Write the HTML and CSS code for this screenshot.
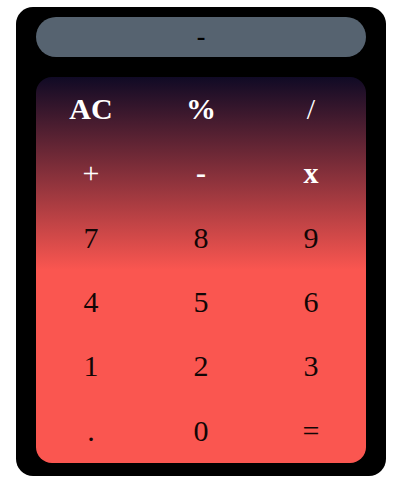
FILE: index.html
```html
<!DOCTYPE html>
<html>
<head>
<meta charset="utf-8">
<link rel="stylesheet" href="styles.css">
</head>
<body>
<div class="calc">
  <div class="display">-</div>
  <div class="keypad">
    <button class="key op bold">AC</button>
    <button class="key op bold">%</button>
    <button class="key op">/</button>
    <button class="key op">+</button>
    <button class="key op bold">-</button>
    <button class="key op bold">x</button>
    <button class="key">7</button>
    <button class="key">8</button>
    <button class="key">9</button>
    <button class="key">4</button>
    <button class="key">5</button>
    <button class="key">6</button>
    <button class="key">1</button>
    <button class="key">2</button>
    <button class="key">3</button>
    <button class="key">.</button>
    <button class="key">0</button>
    <button class="key">=</button>
  </div>
</div>
</body>
</html>
```
FILE: styles.css
```css
html, body {
  margin: 0;
  padding: 0;
  background: #ffffff;
}
body {
  padding: 7px 0 0 16px;
  font-family: "Liberation Serif", "Times New Roman", serif;
}
.calc {
  width: 370px;
  box-sizing: border-box;
  background: #000000;
  border-radius: 17px;
  padding: 10px 20px 13px;
  display: flex;
  flex-direction: column;
  gap: 20px;
}
.display {
  height: 40px;
  border-radius: 20px;
  background: #566370;
  color: #000;
  font-weight: bold;
  font-size: 26px;
  display: flex;
  align-items: center;
  justify-content: center;
}
.keypad {
  height: 386px;
  border-radius: 16px;
  background: linear-gradient(to bottom, #100a25 0%, #fa5650 50%, #fa5650 100%);
  display: grid;
  grid-template-columns: repeat(3, 1fr);
  grid-template-rows: repeat(6, 1fr);
}
.key {
  background: transparent;
  border: none;
  padding: 0;
  margin: 0;
  font-family: "Liberation Serif", "Times New Roman", serif;
  font-size: 30px;
  color: #120606;
  display: flex;
  align-items: center;
  justify-content: center;
}
.op {
  color: #ffffff;
}
.bold {
  font-weight: bold;
}
```
